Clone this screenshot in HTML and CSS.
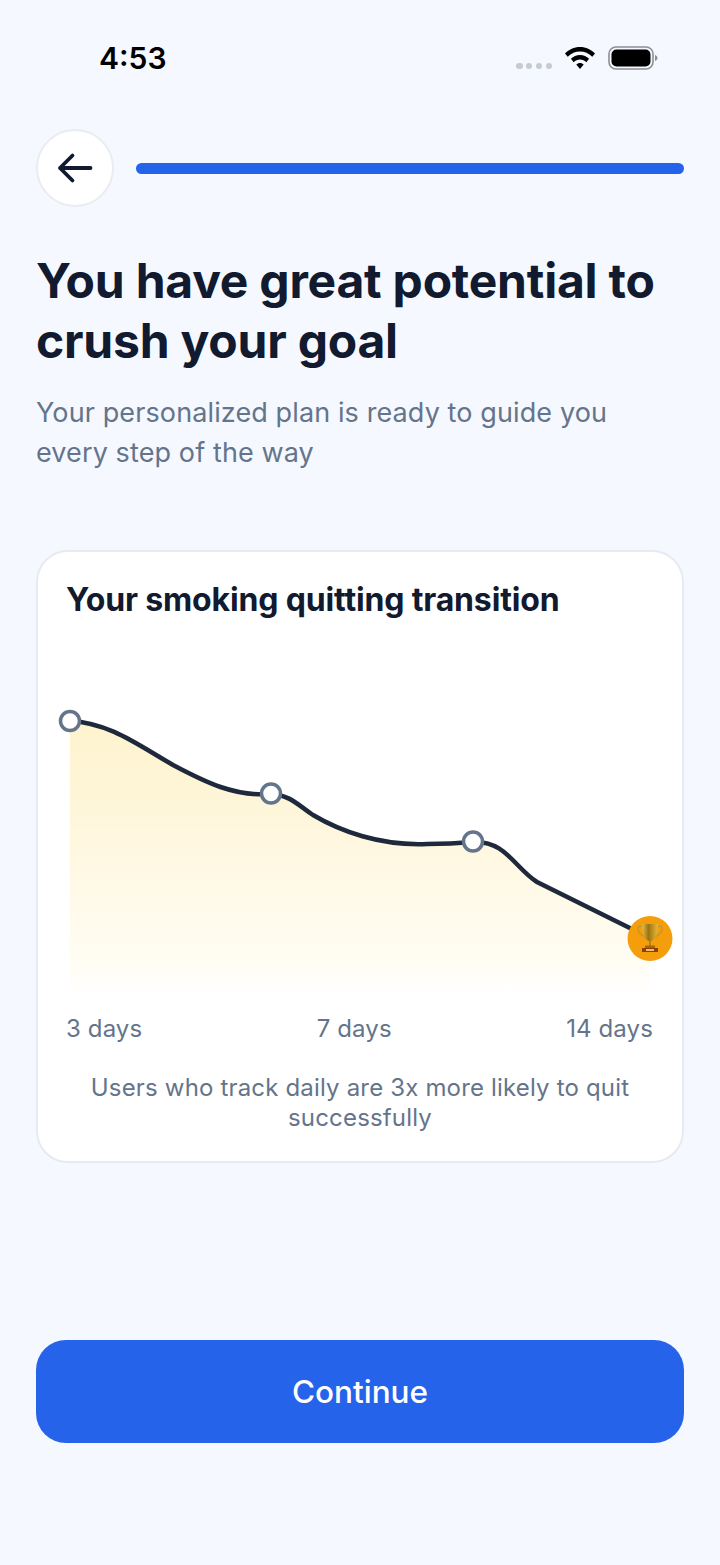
FILE: index.html
```html
<!DOCTYPE html>
<html lang="en">
<head>
<meta charset="utf-8">
<title>Your plan</title>
<link rel="stylesheet" href="styles.css">
</head>
<body>
<div class="screen">
  <div class="status">
    <span class="time">4:53</span>
    <div class="status-icons">
      <div class="signal"><i></i><i></i><i></i><i></i></div>
      <svg class="wifi" viewBox="2.300 4 27.400 18" width="30" height="22" preserveAspectRatio="none"><path d="M16 4C10.500 4 6 6 2.300 9.300L4.800 12C8 9.200 11.800 7.700 16 7.700S24 9.200 27.200 12L29.700 9.300C26 6 21.500 4 16 4Z" fill="#000"/><path d="M16 10.500C12.800 10.500 9.900 11.700 7.700 13.700L10.200 16.400C11.800 15 13.800 14.200 16 14.200S20.200 15 21.800 16.400L24.300 13.700C22.100 11.700 19.200 10.500 16 10.500Z" fill="#000"/><path d="M16 17C14.700 17 13.500 17.500 12.600 18.300L16 22L19.400 18.300C18.500 17.500 17.300 17 16 17Z" fill="#000"/></svg>
      <svg class="battery" viewBox="0 0 50 24" width="50" height="24"><rect x="1" y="1" width="44" height="22" rx="7" fill="none" stroke="#8e8e93" stroke-width="1.600"/><rect x="3.500" y="3.500" width="39" height="17" rx="5" fill="#000"/><path d="M47 9v6c1.500-.5 2.500-1.600 2.500-3S48.500 9.500 47 9Z" fill="#8e8e93"/></svg>
    </div>
  </div>

  <div class="topbar">
    <button class="back" aria-label="Back">
      <svg viewBox="0 0 36 36" width="36" height="36"><path d="M33.500 18H3M15.500 5.500 3 18l12.500 12.500" fill="none" stroke="#111a2e" stroke-width="3.800" stroke-linecap="round" stroke-linejoin="round"/></svg>
    </button>
    <div class="progress"></div>
  </div>

  <h1>You have great potential to crush your goal</h1>
  <p class="sub">Your personalized plan is ready to guide you every step of the way</p>

  <section class="card">
    <h2>Your smoking quitting transition</h2>
    <svg class="chart" viewBox="37 630 646 370" width="646" height="370">
      <defs>
        <linearGradient id="fade" x1="0" y1="0" x2="0" y2="1">
          <stop offset="0" stop-color="#fef3cd"/>
          <stop offset=".5" stop-color="#fff8e2"/>
          <stop offset=".9" stop-color="#fffdf5"/>
          <stop offset="1" stop-color="#ffffff"/>
        </linearGradient>
        <linearGradient id="cup" x1="0" y1="0" x2="1" y2="0">
          <stop offset="0" stop-color="#e8bc44"/>
          <stop offset=".4" stop-color="#9a7314"/>
          <stop offset=".6" stop-color="#b88a1c"/>
          <stop offset="1" stop-color="#e4b83f"/>
        </linearGradient>
      </defs>
      <path d="M70 721C110 723 138 745 173 765C205 782 235 797 271 794C290 795 298 805 313 815C340 831 380 846 427 844C450 844 462 843 473 842C505 840 515 868 537 882L650 938V996H70Z" fill="url(#fade)"/>
      <path d="M70 721C110 723 138 745 173 765C205 782 235 797 271 794C290 795 298 805 313 815C340 831 380 846 427 844C450 844 462 843 473 842C505 840 515 868 537 882L650 938" fill="none" stroke="#1e293b" stroke-width="4.500" stroke-linecap="round"/>
      <circle cx="70" cy="721" r="9.500" fill="#fff" stroke="#64748b" stroke-width="3.500"/>
      <circle cx="271" cy="793.500" r="9.500" fill="#fff" stroke="#64748b" stroke-width="3.500"/>
      <circle cx="473" cy="841.500" r="9.500" fill="#fff" stroke="#64748b" stroke-width="3.500"/>
      <circle cx="650" cy="938.500" r="22.500" fill="#f59e0b"/>
      <path d="M643 927c-4-2-6 0-5 3s4 6 8 7M657 927c4-2 6 0 5 3s-4 6-8 7" fill="none" stroke="#c4962a" stroke-width="1.300"/>
      <path d="M642 924h16c0 9-2 15-6.500 17h-3C644 939 642 933 642 924Z" fill="url(#cup)"/>
      <rect x="649" y="941" width="2" height="5" fill="#b8860f"/>
      <rect x="645" y="945.500" width="10" height="2.500" fill="#a3660d"/>
      <rect x="642" y="948" width="16" height="4" fill="#8f3f06"/>
      <rect x="646" y="949" width="8" height="2" fill="#e6c070"/>
    </svg>
    <div class="axis"><span>3 days</span><span>7 days</span><span>14 days</span></div>
    <p class="note">Users who track daily are 3x more likely to quit successfully</p>
  </section>

  <button class="cta">Continue</button>
</div>
</body>
</html>
```
FILE: styles.css
```css
* { box-sizing: border-box; }
html, body { margin: 0; padding: 0; }
body { background: #f5f8ff; font-family: Inter, "Liberation Sans", sans-serif; }
.screen { width: 720px; height: 1565px; padding: 0 36px; display: flex; flex-direction: column; background: #f5f8ff; }
.status { height: 129px; padding: 40px 26px 0 63px; display: flex; justify-content: space-between; align-items: flex-start; flex-shrink: 0; }
.time { font-size: 30px; line-height: 36px; font-weight: 600; color: #000; }
.status-icons { display: flex; align-items: center; gap: 13px; height: 36px; }
.signal { display: flex; gap: 3.300px; margin-top: 16px; }
.signal i { width: 6.500px; height: 6.500px; border-radius: 50%; background: #c6cad1; }
.topbar { display: flex; align-items: center; gap: 22px; height: 78px; flex-shrink: 0; }
.back { width: 78px; height: 78px; border-radius: 50%; background: #fff; border: 2px solid #e9ecf1; padding: 0; display: flex; align-items: center; justify-content: center; flex-shrink: 0; }
.progress { flex: 1; height: 11px; border-radius: 6px; background: #2563eb; }
h1 { margin: 44px 0 0; font-size: 48px; line-height: 60px; font-weight: 700; color: #111a2e; letter-spacing: -.22px; }
.sub { margin: 22px 40px 0 0; font-size: 27px; line-height: 40px; color: #64748b; letter-spacing: .11px; }
.card { margin-top: 77px; height: 613px; background: #fff; border: 2px solid #e6eaf1; border-radius: 32px; display: flex; flex-direction: column; flex-shrink: 0; }
h2 { margin: 27px 0 0 28px; font-size: 32px; line-height: 42px; font-weight: 700; color: #111a2e; letter-spacing: -.16px; }
.chart { display: block; margin: 9px 0 0 -1px; flex-shrink: 0; }
.axis { display: flex; justify-content: space-between; padding: 0 29px 0 28px; margin-top: 13px; font-size: 24px; line-height: 32px; color: #64748b; letter-spacing: .12px; }
.note { margin: 28px 30px 0; text-align: center; font-size: 24px; line-height: 30px; color: #64748b; letter-spacing: .17px; }
.cta { margin-top: 177px; height: 103px; border: 0; border-radius: 30px; background: #2563eb; color: #fff; font: 500 31.500px/40px Inter, "Liberation Sans", sans-serif; flex-shrink: 0; }
```
